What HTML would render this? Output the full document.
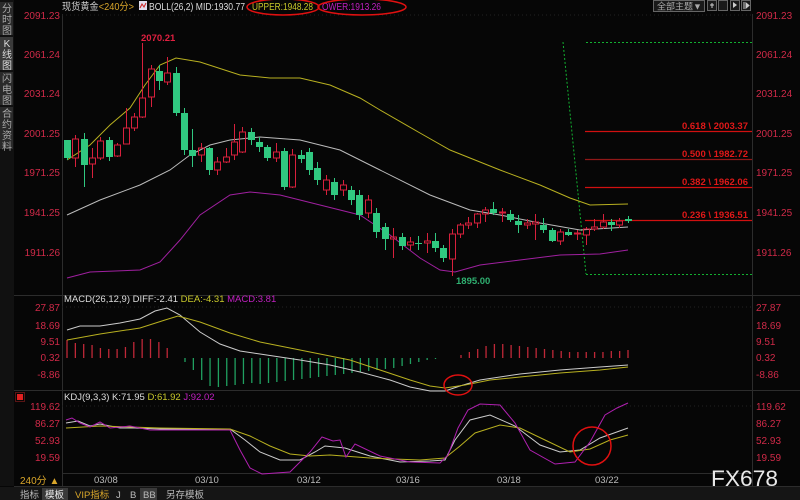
<!DOCTYPE html>
<html><head><meta charset="utf-8"><style>
body{margin:0;background:#060606;width:800px;height:500px;overflow:hidden;font-family:"Liberation Sans","Noto Sans CJK SC",sans-serif}
svg{position:absolute;left:0;top:0}
</style></head><body>
<svg id="s" width="800" height="500" xmlns="http://www.w3.org/2000/svg" font-family="Liberation Sans, Noto Sans CJK SC, sans-serif">
<rect width="800" height="500" fill="#060606"/>
<!-- sidebar -->
<rect x="0" y="0" width="14" height="486" fill="#111"/>
<rect x="0" y="2" width="13" height="33" fill="#2a2a2a"/>
<rect x="0" y="37" width="13" height="33" fill="#3a3a3a"/>
<rect x="0" y="72" width="13" height="33" fill="#2a2a2a"/>
<rect x="0" y="107" width="13" height="42" fill="#2a2a2a"/>
<g fill="#aaa" font-size="10" text-anchor="middle">
<text x="7" y="12">分</text><text x="7" y="23">时</text><text x="7" y="34">图</text>
<text x="7" y="47" fill="#ddd">K</text><text x="7" y="58" fill="#ddd">线</text><text x="7" y="69" fill="#ddd">图</text>
<text x="7" y="82">闪</text><text x="7" y="93">电</text><text x="7" y="104">图</text>
<text x="7" y="117">合</text><text x="7" y="128">约</text><text x="7" y="139">资</text><text x="7" y="150">料</text>
</g>
<!-- frame lines -->
<g stroke="#2c2c2c" stroke-width="1">
<line x1="62.5" y1="14" x2="62.5" y2="486"/>
<line x1="752.5" y1="14" x2="752.5" y2="486"/>
<line x1="14" y1="295.5" x2="800" y2="295.5"/>
<line x1="14" y1="390.5" x2="800" y2="390.5"/>
<line x1="14" y1="486.5" x2="800" y2="486.5"/>
<line x1="62" y1="473.5" x2="752" y2="473.5"/>
</g>
<g stroke="#222" stroke-dasharray="1,3">
<line x1="62" y1="15" x2="752" y2="15"/>
<line x1="62" y1="307" x2="752" y2="307"/>
<line x1="62" y1="406" x2="752" y2="406"/>
</g>
<!-- header -->
<text x="62" y="10" font-size="10" fill="#ccc" textLength="72" lengthAdjust="spacingAndGlyphs">现货黄金<tspan fill="#d9a62a">&lt;240分&gt;</tspan></text>
<rect x="139" y="1" width="8" height="9" fill="#dde" /><path d="M140 8 L142 4 L144 7 L146 3" stroke="#c22" fill="none"/>
<text x="149" y="10" font-size="10" fill="#ddd" textLength="96" lengthAdjust="spacingAndGlyphs">BOLL(26,2) MID:1930.77</text>
<text x="252" y="10" font-size="10" fill="#c8c82a" textLength="61" lengthAdjust="spacingAndGlyphs">UPPER:1948.28</text>
<text x="322" y="10" font-size="10" fill="#c020c0" textLength="59" lengthAdjust="spacingAndGlyphs">OWER:1913.26</text>
<ellipse cx="283" cy="7" rx="36" ry="8" fill="none" stroke="#e01010" stroke-width="1.5"/>
<ellipse cx="362" cy="7" rx="44" ry="8" fill="none" stroke="#e01010" stroke-width="1.5"/>
<rect x="653.5" y="0.5" width="51" height="11" fill="#1a1a1a" stroke="#666"/>
<text x="657" y="9.5" font-size="9" fill="#aaa">全部主题▼</text>
<g fill="#1a1a1a" stroke="#666"><rect x="707.5" y="0.5" width="9" height="10"/><rect x="718.5" y="0.5" width="9" height="10"/><rect x="730.5" y="0.5" width="9" height="10"/><rect x="741.5" y="0.5" width="9" height="10"/></g>
<g fill="#ccc"><path d="M710 5h4M712 3v5" stroke="#ccc"/><path d="M733 2l4 3-4 3z"/><path d="M744 2v7M746 3l3 2.5-3 2.5z" stroke="#ccc"/></g>
<!-- axis labels -->
<g font-size="10" fill="#d02a48">
<g text-anchor="end">
<text x="60" y="19">2091.23</text><text x="60" y="58">2061.24</text><text x="60" y="97">2031.24</text><text x="60" y="137">2001.25</text><text x="60" y="176">1971.25</text><text x="60" y="216">1941.25</text><text x="60" y="256">1911.26</text>
<text x="60" y="311">27.87</text><text x="60" y="329">18.69</text><text x="60" y="345">9.51</text><text x="60" y="361">0.32</text><text x="60" y="378">-8.86</text>
<text x="60" y="410">119.62</text><text x="60" y="427">86.27</text><text x="60" y="444">52.93</text><text x="60" y="461">19.59</text>
</g>
<text x="756" y="19">2091.23</text><text x="756" y="58">2061.24</text><text x="756" y="97">2031.24</text><text x="756" y="137">2001.25</text><text x="756" y="176">1971.25</text><text x="756" y="216">1941.25</text><text x="756" y="256">1911.26</text>
<text x="756" y="311">27.87</text><text x="756" y="329">18.69</text><text x="756" y="345">9.51</text><text x="756" y="361">0.32</text><text x="756" y="378">-8.86</text>
<text x="756" y="410">119.62</text><text x="756" y="427">86.27</text><text x="756" y="444">52.93</text><text x="756" y="461">19.59</text>
</g>
<!-- fib -->
<g stroke="#d01010" stroke-width="1.2"><line x1="585" y1="131.5" x2="752" y2="131.5"/><line x1="585" y1="159.5" x2="752" y2="159.5" stroke="#901818"/><line x1="585" y1="187.5" x2="752" y2="187.5"/><line x1="585" y1="220.5" x2="752" y2="220.5"/></g>
<g font-size="9.5" fill="#e01818" text-anchor="end" font-weight="bold"><text x="748" y="129">0.618 \ 2003.37</text><text x="748" y="157">0.500 \ 1982.72</text><text x="748" y="185">0.382 \ 1962.06</text><text x="748" y="218">0.236 \ 1936.51</text></g>
<g stroke="#12b030" stroke-dasharray="2,2" fill="none"><line x1="586" y1="42.5" x2="752" y2="42.5"/><line x1="586" y1="274.5" x2="752" y2="274.5"/><line x1="563" y1="42" x2="586" y2="274"/></g>
<g id="dyn"></g>
<text x="141" y="41" font-size="9.5" fill="#e02040" font-weight="bold">2070.21</text>
<text x="456" y="284" font-size="9.5" fill="#2fb070" font-weight="bold">1895.00</text>
<!-- MACD header -->
<text x="64" y="302" font-size="9.5" fill="#ddd">MACD(26,12,9) DIFF:-2.41 <tspan fill="#c8c82a">DEA:-4.31</tspan> <tspan fill="#c020c0">MACD:3.81</tspan></text>
<text x="64" y="400" font-size="9.5" fill="#ddd">KDJ(9,3,3) K:71.95 <tspan fill="#c8c82a">D:61.92</tspan> <tspan fill="#c020c0">J:92.02</tspan></text>
<rect x="17" y="394" width="6" height="6" fill="#e02020"/><rect x="15.5" y="392.5" width="9" height="9" fill="none" stroke="#a22" stroke-dasharray="1,1"/>
<ellipse cx="458" cy="385" rx="14" ry="10" fill="none" stroke="#e01010" stroke-width="1.5"/>
<circle cx="592" cy="446" r="19" fill="none" stroke="#e01010" stroke-width="1.5"/>
<!-- dates -->
<g font-size="9.5" fill="#bbb"><text x="94" y="483">03/08</text><text x="195" y="483">03/10</text><text x="297" y="483">03/12</text><text x="396" y="483">03/16</text><text x="497" y="483">03/18</text><text x="595" y="483">03/22</text></g>
<text x="20" y="484" font-size="10" fill="#d9a62a">240分 ▲</text>
<!-- bottom tabs -->
<rect x="0" y="487" width="800" height="13" fill="#151515"/>
<rect x="42" y="488" width="26" height="12" fill="#3a3a3a"/><rect x="140" y="488" width="17" height="12" fill="#3a3a3a"/>
<g font-size="9.5" fill="#bbb"><text x="20" y="498">指标</text><text x="45" y="498" fill="#eee">模板</text><text x="75" y="498" fill="#d9a62a">VIP指标</text><text x="116" y="498">J</text><text x="130" y="498">B</text><text x="143" y="498">BB</text><text x="166" y="498">另存模板</text></g>
<text x="711" y="486" font-size="22" fill="#e8e8e8" textLength="67" lengthAdjust="spacingAndGlyphs">FX678</text>
</svg>
<script>
var g=document.getElementById('dyn'),h='';
function pl(pts,c,w){h+='<polyline fill="none" stroke="'+c+'" stroke-width="'+(w||1)+'" points="'+pts.map(p=>p.join(',')).join(' ')+'"/>';}
pl([[67,160],[90,145],[110,125],[130,108],[145,85],[160,65],[176,58],[200,62],[240,75],[270,78],[300,78],[330,85],[360,98],[380,110],[420,133],[450,150],[480,162],[500,170],[540,185],[570,198],[590,205],[628,204]],'#b8b020');
pl([[67,215],[100,200],[140,185],[170,170],[190,155],[210,145],[230,140],[260,137],[300,140],[340,150],[380,170],[430,195],[470,210],[500,215],[540,223],[580,230],[628,227]],'#bbb');
pl([[67,278],[90,272],[140,270],[160,262],[180,240],[200,215],[230,195],[250,192],[280,195],[320,205],[360,215],[390,235],[420,258],[440,270],[455,272],[480,265],[520,260],[560,255],[600,254],[628,250]],'#a020a0');
var C=[[67,140,158,140,160],[75,158,139,135,167],[84,139,165,133,187],[92,164,158,148,178],[100,158,141,137,160],[109,140,157,137,161],[117,156,145,143,157],[126,144,128,108,144],[134,128,117,113,131],[142,117,98,43,118],[151,97,69,65,107],[159,71,81,65,90],[167,82,73,57,85],[176,73,113,67,116],[184,113,150,108,155],[192,150,156,129,167],[201,155,148,143,162],[209,148,170,147,175],[217,170,162,157,175],[226,162,157,148,163],[234,155,142,124,160],[242,152,132,127,153],[251,132,140,128,145],[259,142,147,137,152],[267,147,158,145,161],[276,158,152,143,162],[284,151,187,148,190],[292,187,155,149,188],[301,155,159,150,163],[309,152,170,148,175],[317,168,180,162,185],[326,190,180,175,195],[334,182,195,178,200],[343,190,185,180,196],[351,190,200,186,205],[359,195,215,190,220],[368,213,200,195,218],[376,213,232,208,238],[385,227,239,223,250],[393,239,237,228,258],[402,237,246,233,250],[410,245,242,237,250],[418,243,243,236,250],[427,243,241,233,253],[435,241,248,233,252],[443,248,258,245,262],[452,259,234,229,276],[460,234,225,223,238],[468,225,223,217,229],[477,223,214,213,228],[485,214,210,207,222],[493,209,213,202,215],[502,213,212,208,222],[510,214,220,210,222],[518,221,225,215,233],[527,225,223,219,229],[535,224,222,214,240],[543,225,230,218,233],[552,230,241,228,242],[560,241,232,229,245],[568,232,235,229,236],[577,234,233,230,240],[586,235,229,227,245],[594,229,227,219,231],[603,227,222,214,229],[611,222,225,219,231],[619,225,221,218,228],[628,219,221,216,223]];
C.forEach(function(c){var up=c[2]<c[1],col=up?'#d8203c':'#30c880',t=Math.min(c[1],c[2]),b=Math.max(c[1],c[2]);if(b-t<1)b=t+1;
h+='<line x1="'+(c[0]+.5)+'" y1="'+c[3]+'" x2="'+(c[0]+.5)+'" y2="'+t+'" stroke="'+col+'"/><line x1="'+(c[0]+.5)+'" y1="'+b+'" x2="'+(c[0]+.5)+'" y2="'+c[4]+'" stroke="'+col+'"/>';
h+=up?'<rect x="'+(c[0]-2.5)+'" y="'+t+'" width="6" height="'+(b-t)+'" fill="none" stroke="'+col+'"/>':'<rect x="'+(c[0]-3)+'" y="'+t+'" width="7" height="'+(b-t)+'" fill="'+col+'"/>';});
var Z=358,i,x;
var red1=[340,343,344,345,348,349,349,347,342,339,339,342,348];
for(i=0;i<red1.length;i++){x=67+i*8.35;h+='<line x1="'+x+'" y1="'+Z+'" x2="'+x+'" y2="'+red1[i]+'" stroke="#c02838" stroke-width="1.3"/>';}
var gr=[362,370,380,386,387,386,385,384,383,384,383,382,381,380,379,378,377,376,375,374,373,372,371,370,369,368,366,364,362,360,359];
for(i=0;i<gr.length;i++){x=185+i*8.35;h+='<line x1="'+x+'" y1="'+Z+'" x2="'+x+'" y2="'+gr[i]+'" stroke="#20a060" stroke-width="1.3"/>';}
var red2=[355,352,349,346,344,344,345,346,347,348,349,350,351,352,352,352,352,352,351,351,350];
for(i=0;i<red2.length;i++){x=461+i*8.35;h+='<line x1="'+x+'" y1="'+Z+'" x2="'+x+'" y2="'+red2[i]+'" stroke="#c02838" stroke-width="1.3"/>';}
pl([[67,330],[80,326],[100,326],[120,323],[140,319],[155,311],[167,308],[180,315],[200,332],[220,344],[240,351],[260,354],[280,357],[300,360],[330,365],[360,372],[390,380],[410,387],[430,391],[445,391],[460,386],[480,380],[520,374],[560,370],[600,367],[628,365]],'#ccc');
pl([[67,340],[100,334],[140,328],[165,320],[178,316],[200,322],[230,333],[260,342],[290,348],[320,354],[350,360],[380,370],[410,380],[430,386],[445,388],[465,385],[490,380],[520,377],[560,373],[600,370],[628,367]],'#b8b020');
pl([[66,423],[78,421],[90,426],[100,424],[110,426],[120,428],[135,428],[160,429],[230,429],[245,440],[260,452],[280,460],[300,460],[315,452],[325,446],[345,448],[370,456],[400,462],[430,461],[445,460],[455,440],[470,420],[490,415],[515,426],[540,445],[560,452],[580,450],[600,438],[628,428]],'#ccc');
pl([[66,428],[100,426],[160,428],[230,429],[250,436],[270,446],[290,454],[310,456],[330,455],[370,458],[420,460],[445,458],[460,446],[475,433],[500,425],[520,428],[545,440],[570,452],[590,449],[610,440],[628,435]],'#b8b020');
pl([[66,420],[72,418],[80,423],[90,427],[100,422],[110,428],[130,426],[150,430],[200,430],[230,430],[240,450],[250,468],[262,474],[290,472],[310,452],[322,437],[333,441],[340,440],[346,457],[355,444],[380,456],[410,462],[440,463],[448,455],[458,428],[468,410],[480,404],[500,405],[515,423],[530,450],[555,464],[575,462],[590,442],[605,415],[617,408],[628,403]],'#b020b0');
g.innerHTML=h;
</script>
</body></html>
